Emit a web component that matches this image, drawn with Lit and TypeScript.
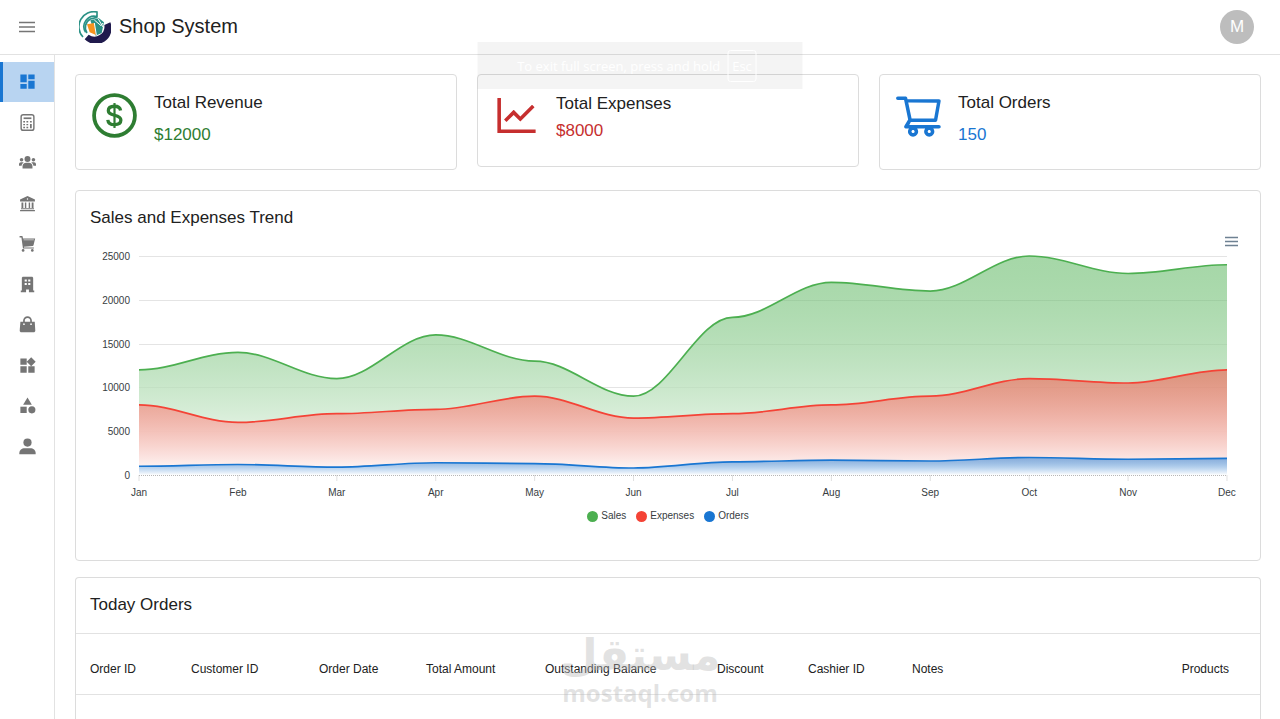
import { LitElement, html, css, svg } from "lit";
import { customElement } from "lit/decorators.js";
import { classMap } from "lit/directives/class-map.js";

const MONTHS = ["Jan", "Feb", "Mar", "Apr", "May", "Jun", "Jul", "Aug", "Sep", "Oct", "Nov", "Dec"];
const TICKS = [25000, 20000, 15000, 10000, 5000, 0];
const MAX = 25000;
const SERIES = [
  { id: "sales", name: "Sales", color: "#4caf50", data: [12000, 14000, 11000, 16000, 13000, 9000, 18000, 22000, 21000, 25000, 23000, 24000] },
  { id: "expenses", name: "Expenses", color: "#f44336", data: [8000, 6000, 7000, 7500, 9000, 6500, 7000, 8000, 9000, 11000, 10500, 12000] },
  { id: "orders", name: "Orders", color: "#1976d2", data: [1000, 1200, 900, 1400, 1300, 800, 1500, 1700, 1600, 2000, 1800, 1900] },
];

const NAV = [
  { label: "Dashboard", art: svg`<path d="M3 13h8V3H3v10zm0 8h8v-6H3v6zm10 0h8V11h-8v10zm0-18v6h8V3h-8z"/>` },
  { label: "Point of sale", art: svg`<g fill="none" stroke="currentColor" stroke-width="2"><rect x="3" y="1" width="18" height="22" rx="3"/><path d="M6.500 6h11" stroke-width="2.400"/></g><path d="M6 10h2.500v2H6zM10.500 10H13v2h-2.500zM15.500 10H18v2h-2.500zM6 14h2.500v2H6zM10.500 14H13v2h-2.500zM15.500 14H18v6h-2.500zM6 18h2.500v2H6zM10.500 18H13v2h-2.500z"/>` },
  { label: "Customers", art: svg`<circle cx="12" cy="7" r="4.200"/><circle cx="3.600" cy="8" r="2.500"/><circle cx="20.400" cy="8" r="2.500"/><path d="M5 20.500v-3.200c0-3 2.200-4.800 5-4.800h4c2.800 0 5 1.800 5 4.800v3.200zM0 16.500v-2c0-1.700 1.200-2.800 2.800-2.800h2c.7 0 1.300.2 1.700.6-1.700 1-2.600 2.400-2.800 4.200zM24 16.500v-2c0-1.700-1.200-2.800-2.800-2.800h-2c-.7 0-1.300.2-1.700.6 1.700 1 2.600 2.400 2.800 4.200z"/>` },
  { label: "Bank", art: svg`<path d="M12 1.500 22.500 6.500V9h-21V6.500zM3.500 10.500h2.600v8H3.500zM8.300 10.500h2v8h-2zM13.700 10.500h2v8h-2zM17.900 10.500h2.600v8h-2.600zM2.800 18.800h18.400v1.400H2.800zM1.500 21.200h21v1.800h-21z"/><circle cx="12" cy="5.700" r="1" fill="#fff"/>` },
  { label: "Orders", art: svg`<path d="M.8 1.500h4l1 3.500H22.800l-2.300 9.500c-.2.700-.6 1-1.300 1.100L7 16.600l.2 1H21v1.600H5.600L3.400 3.500H.8z"/><path d="M6.500 6.800H21" stroke="#fff" stroke-width=".8"/><circle cx="5.800" cy="21.800" r="1.900"/><circle cx="18.800" cy="21.800" r="1.900"/>` },
  { label: "Branches", art: svg`<path fill-rule="evenodd" d="M4 3c0-1.200.8-2 2-2h12c1.200 0 2 .8 2 2v17.500h1.500V23H14v-4h-4v4H2.500v-2.500H4zM8 5v2.800h3V5zm5 0v2.800h3V5zM8 10v2.800h3V10zm5 0v2.800h3V10z"/>` },
  { label: "Products", art: svg`<path d="M2 8h20.200l.8 12.500c0 1.400-1 2.500-2.500 2.500h-17C2 23 1 21.900 1 20.500z"/><path d="M7 11V6.500a5 5 0 0 1 10 0V11" fill="none" stroke="currentColor" stroke-width="2.400"/><circle cx="7" cy="11.500" r="1.200" fill="#fff"/><circle cx="17" cy="11.500" r="1.200" fill="#fff"/>` },
  { label: "Widgets", art: svg`<path d="M13 13v8h8v-8h-8zM3 21h8v-8H3v8zM3 3v8h8V3H3zm13.660-1.310L11 7.340 16.660 13l5.660-5.660-5.660-5.650z"/>` },
  { label: "Categories", art: svg`<path d="m12 2-5.500 9h11z"/><circle cx="17.500" cy="17.500" r="4.500"/><path d="M3 13.500h8v8H3z"/>` },
  { label: "Profile", art: svg`<circle cx="12" cy="6.500" r="5.800"/><path d="M.5 23v-1.500c0-4.500 3.500-7 7.500-7h8c4 0 7.500 2.500 7.500 7V23z"/>` },
];

const DOLLAR = svg`<g fill="none" stroke="currentColor" stroke-width="76"><circle cx="512" cy="512" r="410"/><path stroke-width="66" d="M634 410c-8-54-50-84-122-84-74 0-124 32-124 90 0 124 252 58 252 188 0 60-54 92-128 92-78 0-128-34-134-98"/><path stroke-width="44" d="M512 262v500"/></g>`;
const LINE = svg`<path d="M888 792H200V168c0-4.400-3.600-8-8-8h-56c-4.400 0-8 3.600-8 8v688c0 4.400 3.600 8 8 8h752c4.400 0 8-3.600 8-8v-56c0-4.400-3.600-8-8-8zM305.800 637.700c3.100 3.100 8.100 3.100 11.300 0l138.300-137.600L583 628.500c3.100 3.100 8.200 3.100 11.300 0l275.400-275.300c3.100-3.100 3.100-8.200 0-11.300l-39.600-39.600a8.030 8.030 0 0 0-11.300 0l-230 229.900L461.400 404a8.030 8.030 0 0 0-11.300 0L266.300 586.700a8.030 8.030 0 0 0 0 11.300l39.500 39.700z"/>`;
const CART = svg`<path d="M922.900 701.900H327.400l29.900-60.900 496.800-.9c16.800 0 31.200-12 34.200-28.600l68.800-385.100c1.800-10.100-.9-20.500-7.500-28.400a34.990 34.990 0 0 0-26.600-12.500l-632-2.100-5.400-25.400c-3.400-16.200-18-28-34.600-28H96.500a35.300 35.300 0 1 0 0 70.600h125.900L246 312.800l58.100 281.300-74.800 122.100a34.960 34.960 0 0 0-3 36.800c6 11.900 18.100 19.400 31.500 19.400h62.800a102.430 102.430 0 0 0-20.600 61.700c0 56.600 46 102.600 102.600 102.600s102.600-46 102.600-102.600c0-22.300-7.400-44-20.600-61.700h161.100a102.430 102.430 0 0 0-20.600 61.700c0 56.600 46 102.600 102.600 102.600s102.600-46 102.600-102.600c0-22.300-7.400-44-20.600-61.700H923c19.400 0 35.300-15.800 35.300-35.300a35.420 35.420 0 0 0-35.400-35.200zM305.700 253l575.800 1.900-56.400 315.800-452.300.8L305.700 253zm96.900 612.700c-17.400 0-31.600-14.200-31.600-31.600 0-17.400 14.200-31.600 31.600-31.600s31.600 14.200 31.600 31.600a31.600 31.600 0 0 1-31.600 31.600zm325.100 0c-17.400 0-31.600-14.200-31.600-31.600 0-17.400 14.200-31.600 31.600-31.600s31.600 14.200 31.600 31.600a31.600 31.600 0 0 1-31.600 31.600z"/>`;

const STATS = [
  { title: "Total Revenue", value: "$12000", tone: "green", art: DOLLAR, dense: false },
  { title: "Total Expenses", value: "$8000", tone: "red", art: LINE, dense: true },
  { title: "Total Orders", value: "150", tone: "blue", art: CART, dense: false },
];

@customElement("trend-chart")
export class TrendChart extends LitElement {
  static styles = css`
    :host { display: block; }
    .tools { display: flex; justify-content: flex-end; padding-right: 20px; }
    .menu { display: flex; padding: 0; border: 0; background: none; color: #6e8192; cursor: pointer; }
    .body { display: grid; grid-template-columns: 54px 1fr; column-gap: 9px; padding: 2px 33px 0 0; }
    .ylabels { display: flex; flex-direction: column; justify-content: space-between; align-items: flex-end; height: 231px; font-size: 10px; line-height: 12px; color: #373d3f; }
    .plot { padding-top: 5px; min-width: 0; }
    .canvas { display: block; width: 100%; height: 225px; overflow: visible; }
    .months { display: grid; grid-template-columns: repeat(12, 1fr); margin: 6px calc(-100% / 22) 0; text-align: center; font-size: 10px; line-height: 12px; color: #373d3f; }
    .legend { display: flex; justify-content: center; gap: 10px; margin-top: 11px; font-size: 10px; line-height: 12px; color: #373d3f; }
    .entry { display: flex; align-items: center; gap: 3px; }
    .dot { width: 11px; height: 11px; border-radius: 50%; }
    .dot.sales { background: #4caf50; }
    .dot.expenses { background: #f44336; }
    .dot.orders { background: #1976d2; }
  `;

  private readonly w = 1100;
  private readonly h = 219;

  private curve(data: number[]): string {
    const step = this.w / (data.length - 1);
    const y = (v: number) => (this.h * (1 - v / MAX)).toFixed(2);
    return data.reduce((d, v, i) => {
      if (i === 0) return `M0 ${y(v)}`;
      const x0 = (i - 1) * step;
      const x1 = i * step;
      return `${d}C${x0 + step * 0.35} ${y(data[i - 1])} ${x1 - step * 0.35} ${y(v)} ${x1} ${y(v)}`;
    }, "");
  }

  render() {
    const { w, h } = this;
    return html`
      <div class="tools">
        <button class="menu" aria-label="Chart menu">
          <svg width="16" height="16" viewBox="0 0 16 16" fill="none" stroke="currentColor" stroke-width="1.500"><path d="M1 4.500h13M1 8.500h13M1 12.500h13"/></svg>
        </button>
      </div>
      <div class="body">
        <div class="ylabels">${TICKS.map((t) => html`<span>${t}</span>`)}</div>
        <div class="plot">
          <svg class="canvas" viewBox="0 0 ${w} 225" preserveAspectRatio="none" role="img" aria-label="Sales and Expenses Trend">
            <defs>
              ${SERIES.map((s) => svg`<linearGradient id="fill-${s.id}" x1="0" y1="0" x2="0" y2="1">
                <stop offset="0" stop-color=${s.color} stop-opacity=".5"/>
                <stop offset="1" stop-color="#fff" stop-opacity=".9"/>
              </linearGradient>`)}
            </defs>
            ${TICKS.slice(0, -1).map((t) => {
              const y = Math.round(h * (1 - t / MAX)) + 0.5;
              return svg`<path d="M0 ${y}H${w}" stroke="#e4e4e4" vector-effect="non-scaling-stroke"/>`;
            })}
            ${MONTHS.map((_, i) => svg`<path d="M${(i * w) / 11} ${h}v6" stroke="#e0e0e0" vector-effect="non-scaling-stroke"/>`)}
            ${SERIES.map((s) => {
              const line = this.curve(s.data);
              return svg`<path d="${line}V${h}H0Z" fill="url(#fill-${s.id})"/>
                <path d=${line} fill="none" stroke=${s.color} stroke-width="1.700" vector-effect="non-scaling-stroke"/>`;
            })}
            <path d="M0 ${h + 0.5}H${w}" stroke="#b6b6b6" stroke-dasharray="1 1" vector-effect="non-scaling-stroke"/>
          </svg>
          <div class="months">${MONTHS.map((m) => html`<span>${m}</span>`)}</div>
        </div>
      </div>
      <div class="legend">
        ${SERIES.map((s) => html`<span class="entry"><i class="dot ${s.id}"></i>${s.name}</span>`)}
      </div>
    `;
  }
}

@customElement("app-root")
export class AppRoot extends LitElement {
  static styles = css`
    :host { display: block; height: 100vh; overflow: hidden; position: relative; background: #fff; color: #212121; font-family: "Liberation Sans", Arial, sans-serif; }
    * { box-sizing: border-box; }
    h1, h2, p, ul { margin: 0; padding: 0; font-weight: 400; }
    .bar { display: flex; align-items: center; height: 55px; padding: 0 26px 0 18px; border-bottom: 1px solid #e2e2e2; }
    .toggle { display: flex; padding: 0; border: 0; background: none; color: #757575; cursor: pointer; }
    .logo { margin: 0 8px 0 43px; flex: none; }
    .brand { flex: 1; font-size: 20px; line-height: 28px; padding-bottom: 2px; }
    .avatar { width: 34px; height: 34px; padding: 0; border: 0; border-radius: 50%; background: #bdbdbd; color: #fff; font: 17px/34px "Liberation Sans", Arial, sans-serif; cursor: pointer; }
    .shell { display: flex; height: calc(100% - 55px); }
    .side { flex: none; width: 55px; border-right: 1px solid #e2e2e2; padding-top: 7px; }
    .nav { display: grid; grid-template-rows: repeat(10, 1fr); height: 405px; list-style: none; }
    .link { display: flex; align-items: center; justify-content: center; height: 40px; color: #757575; border-left: 3px solid transparent; padding: 0 2px 1px 0; }
    .link.active { background: #b8d4f1; border-left-color: #1976d2; color: #1976d2; }
    .main { flex: 1; min-width: 0; overflow: hidden; padding: 19px 19px 0 20px; display: flex; flex-direction: column; }
    .stats { display: grid; grid-template-columns: repeat(3, 1fr); gap: 20px; align-items: start; }
    .card { border: 1px solid #dcdcdc; border-radius: 4px; background: #fff; }
    .stat { display: flex; gap: 14px; padding: 14px 13px 20px; }
    .stat svg { flex: none; margin-top: 1px; }
    .name, .value, .title { font-size: 17px; }
    .name { line-height: 28px; margin-bottom: 4px; }
    .value { line-height: 28px; }
    .dense { padding-bottom: 23px; }
    .dense .name { line-height: 30px; margin-bottom: 0; }
    .dense .value { line-height: 24px; }
    .green { color: #2e7d32; }
    .red { color: #c62f2f; }
    .blue { color: #1976d2; }
    .trend { margin-top: 20px; padding: 14px 0 38px; }
    .title { line-height: 26px; padding: 0 14px; }
    .trend trend-chart { margin-top: 2px; }
    .today { margin-top: 16px; flex: 1; border-bottom: 0; border-radius: 4px 4px 0 0; }
    .today .title { padding: 14px 14px 15px; border-bottom: 1px solid #e2e2e2; }
    .table { width: 100%; border-collapse: collapse; table-layout: fixed; font-size: 12px; line-height: 16px; }
    .table th { font-weight: 400; text-align: left; padding: 27px 0 17px 14px; border-bottom: 1px solid #e2e2e2; white-space: nowrap; }
    .table th:last-child { text-align: right; padding-right: 31px; }
    .c1 { width: 101px; } .c2 { width: 128px; } .c3 { width: 107px; } .c4 { width: 119px; } .c5 { width: 172px; } .c6 { width: 91px; } .c7 { width: 104px; }
    .toast { position: absolute; top: 42px; left: 50%; transform: translateX(-50%); display: flex; align-items: center; justify-content: center; gap: 7px; width: 325px; height: 47px; padding-right: 6px; background: rgba(0, 0, 0, 0.045); color: #fff; font: 13px/20px "Open Sans", "Noto Sans", sans-serif; pointer-events: none; }
    .key { padding: 5px 4px; border: 1px solid #fff; border-radius: 3px; font: inherit; }
    .mark { position: absolute; bottom: 12px; left: 50%; transform: translateX(-50%); display: flex; flex-direction: column; align-items: center; color: rgba(184, 184, 184, 0.41); font-weight: 700; pointer-events: none; }
    .ar { font-family: "DejaVu Sans", sans-serif; font-size: 44px; line-height: 48px; }
    .en { font-family: "Open Sans", sans-serif; font-size: 24px; line-height: 28px; }
  `;

  render() {
    return html`
      <header class="bar">
        <button class="toggle" aria-label="Toggle menu">
          <svg width="18" height="18" viewBox="0 0 18 18" fill="none" stroke="currentColor" stroke-width="1.500"><path d="M1 4.500h16M1 9h16M1 13.500h16"/></svg>
        </button>
        <svg class="logo" width="32" height="32" viewBox="0 0 96 96" aria-hidden="true">
          <path d="M94 34A47 47 0 0 1 17 85L29 71A30 30 0 0 0 76 42Z" fill="#201a4d"/>
          <path d="M12 78A45 45 0 0 1 54 3V17A31 31 0 0 0 20 64" fill="none" stroke="#2b9186" stroke-width="5"/>
          <path d="M24 66A29 29 0 0 1 34 24L54 19" fill="none" stroke="#2b9186" stroke-width="5"/>
          <path d="M34 28 60 22 75 34 68 66 50 74Z" fill="#2b9186"/>
          <path d="M46 27 66 44 72 36M58 24 72 48" stroke="#fff" stroke-width="3" fill="none"/>
          <path d="M24 40 46 36 51 72 32 64Z" fill="#f7931e"/>
          <path d="M46 36 52 72" stroke="#fff" stroke-width="3" fill="none"/>
        </svg>
        <h1 class="brand">Shop System</h1>
        <button class="avatar" aria-label="Account">M</button>
      </header>
      <div class="shell">
        <nav class="side" aria-label="Main">
          <ul class="nav">
            ${NAV.map((n, i) => html`<li>
              <a class=${classMap({ link: true, active: i === 0 })} href="#" aria-label=${n.label}>
                <svg width=${[0, 7, 8].includes(i) ? 19 : 17} height=${[0, 7, 8].includes(i) ? 19 : 17} viewBox="0 0 24 24" fill="currentColor">${n.art}</svg>
              </a>
            </li>`)}
          </ul>
        </nav>
        <main class="main">
          <section class="stats">
            ${STATS.map((s) => html`<article class=${classMap({ card: true, stat: true, dense: s.dense })}>
              <svg class=${s.tone} width="51" height="51" viewBox="0 0 1024 1024" fill="currentColor" aria-hidden="true">${s.art}</svg>
              <div>
                <h2 class="name">${s.title}</h2>
                <p class="value ${s.tone}">${s.value}</p>
              </div>
            </article>`)}
          </section>
          <section class="card trend">
            <h2 class="title">Sales and Expenses Trend</h2>
            <trend-chart></trend-chart>
          </section>
          <section class="card today">
            <h2 class="title">Today Orders</h2>
            <table class="table">
              <colgroup>
                <col class="c1"><col class="c2"><col class="c3"><col class="c4"><col class="c5"><col class="c6"><col class="c7"><col><col>
              </colgroup>
              <thead>
                <tr>
                  ${["Order ID", "Customer ID", "Order Date", "Total Amount", "Outstanding Balance", "Discount", "Cashier ID", "Notes", "Products"].map((c) => html`<th scope="col">${c}</th>`)}
                </tr>
              </thead>
            </table>
          </section>
        </main>
      </div>
      <div class="toast">To exit full screen, press and hold <kbd class="key">Esc</kbd></div>
      <div class="mark"><span class="ar" lang="ar" dir="rtl">مستقل</span><span class="en">mostaql.com</span></div>
    `;
  }
}
